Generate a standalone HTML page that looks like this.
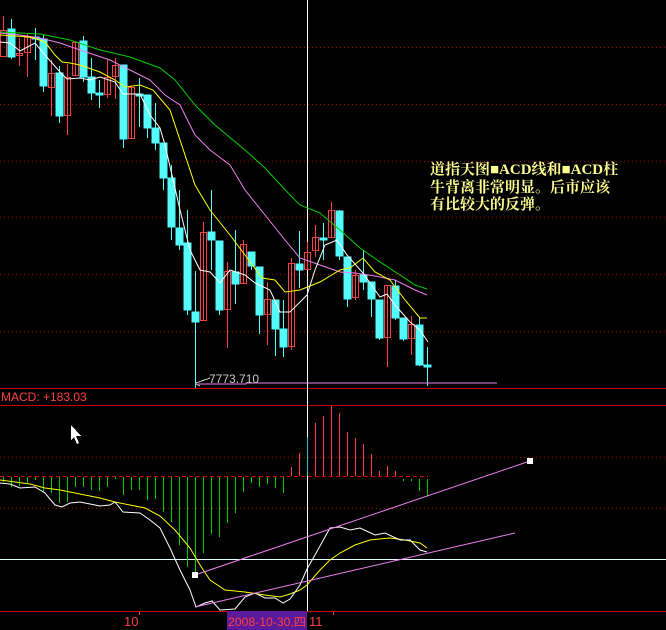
<!DOCTYPE html>
<html><head><meta charset="utf-8"><style>
html,body{margin:0;padding:0;background:#000;width:666px;height:630px;overflow:hidden}
svg{display:block}
</style></head><body>
<svg width="666" height="630" viewBox="0 0 666 630" xmlns="http://www.w3.org/2000/svg" shape-rendering="crispEdges">
<rect width="666" height="630" fill="#000"/>
<g stroke="#a00" stroke-dasharray="1,3" stroke-width="1">
<line x1="0" y1="47.5" x2="666" y2="47.5"/><line x1="0" y1="104.5" x2="666" y2="104.5"/>
<line x1="0" y1="161.5" x2="666" y2="161.5"/><line x1="0" y1="217.5" x2="666" y2="217.5"/>
<line x1="0" y1="274.5" x2="666" y2="274.5"/><line x1="0" y1="331.5" x2="666" y2="331.5"/>
<line x1="0" y1="457.5" x2="666" y2="457.5"/><line x1="0" y1="508.5" x2="666" y2="508.5"/>
</g>
<line x1="0" y1="388.5" x2="666" y2="388.5" stroke="#c00"/>
<line x1="0" y1="405.5" x2="666" y2="405.5" stroke="#c00"/>
<line x1="0" y1="611.5" x2="666" y2="611.5" stroke="#c00"/>
<line x1="0" y1="476.5" x2="428" y2="476.5" stroke="#d00" stroke-dasharray="4,3"/>
<line x1="0" y1="559.5" x2="666" y2="559.5" stroke="#dff"/>
<line x1="307.5" y1="0" x2="307.5" y2="611" stroke="#fff"/>

<g stroke-width="1">
<g stroke="#54fcfc" fill="#54fcfc">
<line x1="11.5" y1="19" x2="11.5" y2="59"/><rect x="8" y="29" width="7" height="28"/>
<line x1="35.5" y1="28" x2="35.5" y2="60"/><rect x="32" y="37" width="7" height="2"/>
<line x1="43.5" y1="35" x2="43.5" y2="92"/><rect x="40" y="39" width="7" height="47"/>
<line x1="59.5" y1="66" x2="59.5" y2="123"/><rect x="56" y="73" width="7" height="43"/>
<line x1="83.5" y1="36" x2="83.5" y2="82"/><rect x="80" y="41" width="7" height="36"/>
<line x1="91.5" y1="58" x2="91.5" y2="100"/><rect x="88" y="77" width="7" height="16"/>
<line x1="99.5" y1="80" x2="99.5" y2="108"/><rect x="96" y="93" width="7" height="2"/>
<line x1="123.5" y1="65" x2="123.5" y2="148"/><rect x="120" y="65" width="7" height="74"/>
<line x1="139.5" y1="78" x2="139.5" y2="127"/><rect x="136" y="94" width="7" height="2"/>
<line x1="147.5" y1="95" x2="147.5" y2="138"/><rect x="144" y="95" width="7" height="33"/>
<line x1="155.5" y1="103" x2="155.5" y2="150"/><rect x="152" y="128" width="7" height="15"/>
<line x1="163.5" y1="143" x2="163.5" y2="190"/><rect x="160" y="143" width="7" height="35"/>
<line x1="171.5" y1="165" x2="171.5" y2="240"/><rect x="168" y="178" width="7" height="49"/>
<line x1="179.5" y1="190" x2="179.5" y2="250"/><rect x="176" y="228" width="7" height="17"/>
<line x1="187.5" y1="210" x2="187.5" y2="315"/><rect x="184" y="243" width="7" height="67"/>
<line x1="195.5" y1="271" x2="195.5" y2="388"/><rect x="192" y="312" width="7" height="10"/>
<line x1="211.5" y1="190" x2="211.5" y2="270"/><rect x="208" y="232" width="7" height="8"/>
<line x1="219.5" y1="241" x2="219.5" y2="315"/><rect x="216" y="241" width="7" height="69"/>
<line x1="235.5" y1="230" x2="235.5" y2="304"/><rect x="232" y="272" width="7" height="12"/>
<line x1="251.5" y1="252" x2="251.5" y2="270"/><rect x="248" y="252" width="7" height="14"/>
<line x1="259.5" y1="267" x2="259.5" y2="334"/><rect x="256" y="267" width="7" height="48"/>
<line x1="275.5" y1="300" x2="275.5" y2="356"/><rect x="272" y="300" width="7" height="29"/>
<line x1="283.5" y1="300" x2="283.5" y2="357"/><rect x="280" y="329" width="7" height="18"/>
<line x1="299.5" y1="231" x2="299.5" y2="288"/><rect x="296" y="264" width="7" height="6"/>
<line x1="323.5" y1="223" x2="323.5" y2="260"/><rect x="320" y="238" width="7" height="2"/>
<line x1="339.5" y1="210" x2="339.5" y2="260"/><rect x="336" y="211" width="7" height="45"/>
<line x1="347.5" y1="257" x2="347.5" y2="307"/><rect x="344" y="257" width="7" height="42"/>
<line x1="363.5" y1="250" x2="363.5" y2="290"/><rect x="360" y="275" width="7" height="7"/>
<line x1="371.5" y1="282" x2="371.5" y2="317"/><rect x="368" y="282" width="7" height="17"/>
<line x1="379.5" y1="300" x2="379.5" y2="340"/><rect x="376" y="300" width="7" height="38"/>
<line x1="395.5" y1="280" x2="395.5" y2="320"/><rect x="392" y="286" width="7" height="32"/>
<line x1="403.5" y1="318" x2="403.5" y2="341"/><rect x="400" y="318" width="7" height="21"/>
<line x1="419.5" y1="317" x2="419.5" y2="366"/><rect x="416" y="325" width="7" height="40"/>
<line x1="427.5" y1="347" x2="427.5" y2="386"/><rect x="424" y="365" width="7" height="2"/>
</g>
<g stroke="#ff4040" fill="none">
<line x1="3.5" y1="16" x2="3.5" y2="30"/><rect x="0.5" y="30.5" width="6" height="26"/>
<line x1="19.5" y1="38" x2="19.5" y2="66"/><rect x="16.5" y="53.5" width="6" height="2"/>
<line x1="27.5" y1="34" x2="27.5" y2="77"/><rect x="24.5" y="37.5" width="6" height="15"/>
<line x1="51.5" y1="60" x2="51.5" y2="116"/><rect x="48.5" y="73.5" width="6" height="14"/>
<line x1="67.5" y1="64" x2="67.5" y2="135"/><rect x="64.5" y="77.5" width="6" height="38"/>
<line x1="75.5" y1="42" x2="75.5" y2="76"/><rect x="72.5" y="42.5" width="6" height="33"/>
<line x1="107.5" y1="59" x2="107.5" y2="98"/><rect x="104.5" y="77.5" width="6" height="17"/>
<line x1="115.5" y1="58" x2="115.5" y2="99"/><rect x="112.5" y="65.5" width="6" height="11"/>
<line x1="131.5" y1="86" x2="131.5" y2="139"/><rect x="128.5" y="87.5" width="6" height="51"/>
<line x1="203.5" y1="222" x2="203.5" y2="321"/><rect x="200.5" y="232.5" width="6" height="88"/>
<line x1="227.5" y1="262" x2="227.5" y2="348"/><rect x="224.5" y="271.5" width="6" height="38"/>
<line x1="243.5" y1="240" x2="243.5" y2="284"/><rect x="240.5" y="244.5" width="6" height="39"/>
<line x1="267.5" y1="282" x2="267.5" y2="345"/><rect x="264.5" y="299.5" width="6" height="15"/>
<line x1="291.5" y1="258" x2="291.5" y2="350"/><rect x="288.5" y="263.5" width="6" height="83"/>
<line x1="307.5" y1="242" x2="307.5" y2="270"/><rect x="304.5" y="252.5" width="6" height="17"/>
<line x1="315.5" y1="225" x2="315.5" y2="257"/><rect x="312.5" y="237.5" width="6" height="13"/>
<line x1="331.5" y1="202" x2="331.5" y2="238"/><rect x="328.5" y="210.5" width="6" height="27"/>
<line x1="355.5" y1="270" x2="355.5" y2="300"/><rect x="352.5" y="275.5" width="6" height="22"/>
<line x1="387.5" y1="285" x2="387.5" y2="367"/><rect x="384.5" y="285.5" width="6" height="52"/>
<line x1="411.5" y1="316" x2="411.5" y2="355"/><rect x="408.5" y="324.5" width="6" height="14"/>
</g>
</g>

<g fill="none" stroke-width="1" shape-rendering="auto">
<polyline stroke="#00d000" points="0,32 40,34 70,40 100,50 130,57 160,68 175,80 195,105 215,125 245,150 265,168 290,195 300,205 320,213 340,230 360,248 380,262 400,275 415,285 427,289"/>
<polyline stroke="#f080f0" points="0,33 20,35 40,38 60,43 80,50 110,60 130,70 150,80 165,95 180,105 195,135 210,150 230,165 245,190 265,215 285,240 300,258 320,265 340,272 355,273 375,276 395,280 415,290 427,295"/>
<polyline stroke="#ffff00" points="0,35 30,37 45,42 55,55 62,62 70,63 80,65 100,72 115,80 125,87 140,85 153,90 170,110 180,140 195,185 210,210 230,235 245,255 262,278 275,280 285,292 300,290 320,282 340,270 350,268 363,258 375,272 390,280 405,300 420,318 427,318"/>
<polyline stroke="#ffffff" points="0,42 10,43 20,51 35,43 45,55 60,72 67,79 80,78 90,80 100,77 115,82 123,94 140,94 150,115 160,128 165,145 172,175 180,210 190,250 200,270 210,272 220,283 230,270 245,275 255,283 270,290 280,312 290,312 307,295 315,270 325,245 337,240 347,255 363,273 375,290 380,297 387,294 395,305 410,322 420,330 428,342"/>
</g>

<polyline fill="none" stroke="#f080f0" points="198,384 246,384 246,383 497,383"/>
<path d="M196,383 l14,-5 M196,384 l4,2" stroke="#ccc" fill="none"/>
<text x="209" y="383" font-family="Liberation Sans, sans-serif" font-size="12" fill="#c8c8c8">7773.710</text>

<text x="430" y="174" font-family="Liberation Serif, Noto Serif CJK SC, serif" font-weight="bold" font-size="15" fill="#ffff90">道指天图■ACD线和■ACD柱</text>
<text x="430" y="192" font-family="Liberation Serif, Noto Serif CJK SC, serif" font-weight="bold" font-size="15" fill="#ffff90">牛背离非常明显。后市应该</text>
<text x="430" y="209" font-family="Liberation Serif, Noto Serif CJK SC, serif" font-weight="bold" font-size="15" fill="#ffff90">有比较大的反弹。</text>

<text x="1" y="401" font-family="Liberation Sans, sans-serif" font-size="12" fill="#ff4040">MACD: +183.03</text>

<g stroke="#00d000" stroke-width="1">
<line x1="3.5" y1="477" x2="3.5" y2="482"/><line x1="11.5" y1="477" x2="11.5" y2="487"/><line x1="19.5" y1="477" x2="19.5" y2="486"/><line x1="27.5" y1="477" x2="27.5" y2="483"/><line x1="35.5" y1="477" x2="35.5" y2="480"/><line x1="43.5" y1="477" x2="43.5" y2="492"/><line x1="51.5" y1="477" x2="51.5" y2="493"/><line x1="59.5" y1="477" x2="59.5" y2="503"/><line x1="67.5" y1="477" x2="67.5" y2="502"/><line x1="75.5" y1="477" x2="75.5" y2="487"/><line x1="83.5" y1="477" x2="83.5" y2="487"/><line x1="91.5" y1="477" x2="91.5" y2="490"/><line x1="99.5" y1="477" x2="99.5" y2="491"/><line x1="107.5" y1="477" x2="107.5" y2="487"/><line x1="115.5" y1="477" x2="115.5" y2="479"/><line x1="123.5" y1="477" x2="123.5" y2="495"/><line x1="131.5" y1="477" x2="131.5" y2="490"/><line x1="139.5" y1="477" x2="139.5" y2="490"/><line x1="147.5" y1="477" x2="147.5" y2="500"/><line x1="155.5" y1="477" x2="155.5" y2="499"/><line x1="163.5" y1="477" x2="163.5" y2="512"/><line x1="171.5" y1="477" x2="171.5" y2="522"/><line x1="179.5" y1="477" x2="179.5" y2="545"/><line x1="187.5" y1="477" x2="187.5" y2="567"/><line x1="195.5" y1="477" x2="195.5" y2="578"/><line x1="203.5" y1="477" x2="203.5" y2="553"/><line x1="211.5" y1="477" x2="211.5" y2="534"/><line x1="219.5" y1="477" x2="219.5" y2="537"/><line x1="227.5" y1="477" x2="227.5" y2="523"/><line x1="235.5" y1="477" x2="235.5" y2="513"/><line x1="243.5" y1="477" x2="243.5" y2="492"/><line x1="251.5" y1="477" x2="251.5" y2="483"/><line x1="259.5" y1="477" x2="259.5" y2="487"/><line x1="267.5" y1="477" x2="267.5" y2="484"/><line x1="275.5" y1="477" x2="275.5" y2="488"/><line x1="283.5" y1="477" x2="283.5" y2="493"/>
<line x1="403.5" y1="479" x2="403.5" y2="481"/><line x1="411.5" y1="479" x2="411.5" y2="481"/><line x1="419.5" y1="479" x2="419.5" y2="491"/><line x1="427.5" y1="479" x2="427.5" y2="496"/>
</g>
<g stroke="#ff4040" stroke-width="1">
<line x1="291.5" y1="467" x2="291.5" y2="476"/><line x1="299.5" y1="453" x2="299.5" y2="476"/><line x1="315.5" y1="423" x2="315.5" y2="476"/><line x1="323.5" y1="416" x2="323.5" y2="476"/><line x1="331.5" y1="406" x2="331.5" y2="476"/><line x1="339.5" y1="413" x2="339.5" y2="476"/><line x1="347.5" y1="432" x2="347.5" y2="476"/><line x1="355.5" y1="438" x2="355.5" y2="476"/><line x1="363.5" y1="444" x2="363.5" y2="476"/><line x1="371.5" y1="454" x2="371.5" y2="476"/><line x1="379.5" y1="471" x2="379.5" y2="476"/><line x1="387.5" y1="466" x2="387.5" y2="476"/><line x1="395.5" y1="471" x2="395.5" y2="476"/>
</g>
<line x1="307.5" y1="437" x2="307.5" y2="476" stroke="#30c0c0"/>

<g fill="none" stroke-width="1" shape-rendering="auto">
<polyline stroke="#ffff00" points="0,480 30,484 45,488 60,490 80,494 100,498 115,502 130,505 145,508 160,516 175,530 190,548 200,565 210,580 225,590 245,592 265,595 280,597 290,594 300,590 307,585 320,570 330,560 340,553 355,545 370,540 390,538 405,540 420,543 427,548"/>
<polyline stroke="#ffffff" points="0,483 10,484 20,488 35,487 45,493 55,505 62,507 70,503 80,502 100,506 110,505 115,502 123,512 140,513 150,520 160,528 170,548 180,570 190,590 196,607 205,603 212,601 220,610 235,609 245,597 255,593 265,598 275,598 283,603 290,599 300,585 307,569 315,555 330,528 340,527 350,530 360,528 375,535 385,533 400,540 410,540 420,550 427,552"/>
<line x1="195" y1="575" x2="530" y2="461" stroke="#f080f0"/>
<line x1="195" y1="607" x2="515" y2="533" stroke="#f080f0"/>
</g>
<rect x="192" y="572" width="6" height="6" fill="#fff"/>
<rect x="527" y="458" width="6" height="6" fill="#fff"/>

<path d="M71,425 L71,440 L74,437 L77,444 L79,443 L76,436 L81,436 Z" fill="#fff"/>

<rect x="227" y="611" width="80" height="19" fill="#5a1a9a"/>
<text x="228" y="626" font-family="Liberation Sans, Noto Sans CJK SC, sans-serif" font-size="12" textLength="78" lengthAdjust="spacingAndGlyphs" fill="#ff4040">2008-10-30,四</text>
<text x="309" y="626" font-family="Liberation Sans, sans-serif" font-size="13" fill="#ff4040">11</text>
<text x="124" y="626" font-family="Liberation Sans, sans-serif" font-size="13" fill="#ff4040">10</text>
<line x1="139.5" y1="612" x2="139.5" y2="615" stroke="#ff4040"/>
<line x1="333.5" y1="612" x2="333.5" y2="615" stroke="#ff4040"/>
</svg>
</body></html>
